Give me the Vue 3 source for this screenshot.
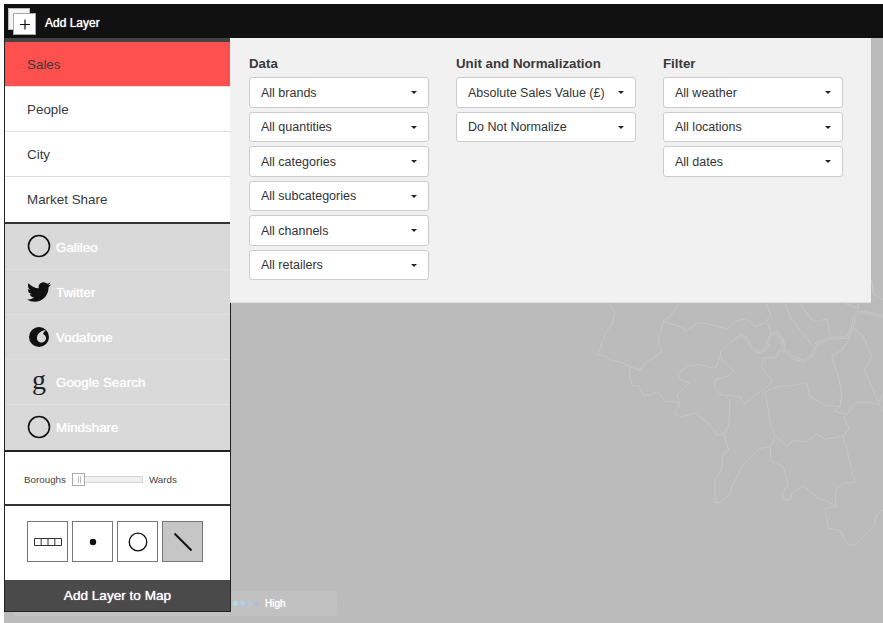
<template>
  <div class="page">
    <div class="topbar">
      <svg class="add-icon" width="32" height="32" viewBox="0 0 32 32">
        <rect x="4.5" y="4.5" width="21" height="21" fill="#f4f4f4" stroke="#bbb" />
        <rect x="9.5" y="9.5" width="22" height="21" fill="#fff" stroke="#aaa" />
        <path d="M21 15.5v10M16 20.5h10" stroke="#111" stroke-width="1.2" />
      </svg>
      <span class="add-label">Add Layer</span>
    </div>

    <div class="map">
      <svg class="boundaries" width="303" height="343" viewBox="0 0 909 1029">
        <path v-for="(d, i) in boundaries" :key="i" :d="d" />
      </svg>

      <div class="legend">
        <span v-for="c in legendDots" :key="c" class="dot" :style="{ background: c }"></span>
        <span class="legend-text">High</span>
      </div>

      <aside class="sidebar">
        <ul class="layers">
          <li v-for="(l, i) in layers" :key="l" :class="{ active: i === 0 }">{{ l }}</li>
        </ul>

        <ul class="sources">
          <li>
            <span class="src-icon"><svg width="24" height="24" viewBox="0 0 24 24"><circle cx="12" cy="12" r="10.5" fill="none" stroke="#111" stroke-width="1.6" /></svg></span>
            <span>Galileo</span>
          </li>
          <li>
            <span class="src-icon"><svg width="24" height="24" viewBox="0 0 24 24"><path fill="#111" d="M23.953 4.57a10 10 0 01-2.825.775 4.958 4.958 0 002.163-2.723c-.951.555-2.005.959-3.127 1.184a4.92 4.92 0 00-8.384 4.482C7.69 8.095 4.067 6.13 1.64 3.162a4.822 4.822 0 00-.666 2.475c0 1.71.87 3.213 2.188 4.096a4.904 4.904 0 01-2.228-.616v.06a4.923 4.923 0 003.946 4.827 4.996 4.996 0 01-2.212.085 4.936 4.936 0 004.604 3.417 9.867 9.867 0 01-6.102 2.105c-.39 0-.779-.023-1.17-.067a13.995 13.995 0 007.557 2.209c9.053 0 13.998-7.496 13.998-13.985 0-.21 0-.42-.015-.63A9.935 9.935 0 0024 4.59z" /></svg></span>
            <span>Twitter</span>
          </li>
          <li>
            <span class="src-icon"><svg width="24" height="24" viewBox="0 0 24 24"><circle cx="12" cy="12" r="10" fill="#111" /><path fill="#d9d9d9" d="M19 5C16 5.500 11 7 10 12 9.500 15 11.500 17.500 14.500 17.500 17.500 17.500 19.300 15 19 12.500 18.700 10.500 17 9.500 16 9 16.500 7 18 6 19 5z" /></svg></span>
            <span>Vodafone</span>
          </li>
          <li>
            <span class="src-icon google">g</span>
            <span>Google Search</span>
          </li>
          <li>
            <span class="src-icon"><svg width="24" height="24" viewBox="0 0 24 24"><circle cx="12" cy="12" r="10.5" fill="none" stroke="#111" stroke-width="1.6" /></svg></span>
            <span>Mindshare</span>
          </li>
        </ul>

        <div class="scale">
          <span>Boroughs</span>
          <div class="slider">
            <div class="handle"></div>
          </div>
          <span>Wards</span>
        </div>

        <div class="shapes">
          <button class="shape">
            <svg width="28" height="8" viewBox="0 0 28 8"><path d="M.5.5h27v7H.5zM7.2.5v7M14 .5v7M20.8.5v7" fill="none" stroke="#333" /></svg>
          </button>
          <button class="shape">
            <svg width="8" height="8" viewBox="0 0 8 8"><circle cx="4" cy="4" r="3.2" fill="#111" /></svg>
          </button>
          <button class="shape">
            <svg width="20" height="20" viewBox="0 0 20 20"><circle cx="10" cy="10" r="8.800" fill="none" stroke="#111" stroke-width="1.300" /></svg>
          </button>
          <button class="shape selected">
            <svg width="20" height="20" viewBox="0 0 20 20"><path d="M1.500 1.500l17 17" stroke="#111" stroke-width="1.900" /></svg>
          </button>
        </div>

        <div class="add-button">Add Layer to Map</div>
      </aside>

      <section class="panel">
        <div v-for="col in columns" :key="col.title" class="column">
          <h3>{{ col.title }}</h3>
          <div v-for="opt in col.options" :key="opt" class="dropdown">
            <span>{{ opt }}</span>
            <i class="caret"></i>
          </div>
        </div>
      </section>
    </div>
  </div>
</template>

<script setup>
const layers = ["Sales", "People", "City", "Market Share"]

const columns = [
  {
    title: "Data",
    options: ["All brands", "All quantities", "All categories", "All subcategories", "All channels", "All retailers"]
  },
  {
    title: "Unit and Normalization",
    options: ["Absolute Sales Value (£)", "Do Not Normalize"]
  },
  {
    title: "Filter",
    options: ["All weather", "All locations", "All dates"]
  }
]

const legendDots = ["#a9dcec", "#b4cfe6", "#b4c4e0", "#b4bbd0"]

// traced by hand from the map, coordinates are 3x
const boundaries = [
  "M88 70L105 100 95 135 75 160 62 200 52 224 75 228 100 243 120 245 150 260 180 270 195 250 245 215 235 180 250 125 300 140 320 152 355 127 400 135 440 148 465 125 500 115 525 140 555 128 572 105 560 70",
  "M250 125L280 100 295 70",
  "M150 260L147 282 157 318 175 315 190 345 210 345 232 335 258 365 285 365 298 370",
  "M298 370L292 345 330 307 300 300 292 283 320 258 360 253 385 262 408 260 420 232 458 270 450 285 405 300 403 320 415 342 435 345 450 365 445 440 432 460 412 465 385 430 345 398 305 412 287 402 298 370",
  "M420 232L422 215 460 180 480 162 500 170 520 205 545 215 560 195 570 160 590 155 610 175 615 205 640 230 670 240 695 225 705 190 750 172 800 170 815 140 820 105 835 92 909 105",
  "M465 178L482 168 498 176 518 212 545 221 564 199 574 166 590 161 604 178 609 208 636 236 670 246 700 229 710 195 752 178 804 175 821 142 826 108 838 98 909 111",
  "M560 128L572 155",
  "M435 345L480 350 492 373 520 350 555 325 578 303 545 263 550 235 590 232 597 210 615 215",
  "M555 335L572 430 585 470 570 500 540 505 490 555 455 620 452 640 420 668 405 668 405 600 425 570 430 520 447 510 432 465",
  "M555 335L600 318 630 318 680 307 690 350 735 375 780 380 785 340 775 290 755 230 790 205 810 170",
  "M780 380L765 395 800 402 830 367 870 367 895 375 909 340",
  "M800 402L792 415 808 445 790 468 735 478 710 462 680 485 640 480 622 500 590 470",
  "M790 468L825 607 790 610 770 625 765 660 768 680 735 660 715 655 670 618 635 640 630 660 615 660 605 640 625 615 610 560 572 542 572 500",
  "M735 685L745 745 780 752 805 795 825 795 865 755 885 730 890 705 909 690",
  "M735 685L768 680",
  "M815 140L850 170 875 230 853 270 880 330 895 370 909 395",
  "M615 70L630 110 695 195",
  "M660 70L700 125 740 118 750 165",
  "M795 70L835 85 835 70",
  "M875 0L880 40 909 60"
]
</script>

<style scoped>
.page {
  height: 623px;
  padding: 4px 0 0 4px;
  box-sizing: border-box;
  display: flex;
  flex-direction: column;
  overflow: hidden;
  font-family: "Liberation Sans", Arial, sans-serif;
  color: #333;
}

.topbar {
  height: 34px;
  flex: none;
  background: #111;
  display: flex;
  align-items: center;
  position: relative;
}

.add-icon {
  position: absolute;
  left: 0;
  top: 0;
}

.add-label {
  margin: 3px 0 0 41px;
  color: #fff;
  font-size: 12px;
  text-shadow: 0 0 1px #fff;
}

.map {
  flex: 1;
  position: relative;
  background: #bbb;
}

.boundaries {
  position: absolute;
  right: 0;
  bottom: 0;
  fill: none;
  stroke: #cbcbcb;
  stroke-width: 2.2;
  stroke-linejoin: round;
}

.legend {
  position: absolute;
  left: 9px;
  bottom: 7px;
  width: 324px;
  height: 25px;
  box-sizing: border-box;
  padding-left: 220px;
  display: flex;
  align-items: center;
  gap: 2px;
  background: #c1c1c1;
  border-radius: 3px;
}

.dot {
  width: 5px;
  height: 5px;
  border-radius: 2px;
}

.legend-text {
  margin-left: 4px;
  color: #fff;
  font-size: 10px;
  text-shadow: 0 0 1px #fff;
}

.sidebar {
  position: relative;
  width: 227px;
  box-sizing: border-box;
  border: 1px solid #222;
  border-top: 4px solid #444;
  background: #fff;
}

.layers,
.sources {
  list-style: none;
  margin: 0;
  padding: 0;
}

.layers li {
  height: 45px;
  box-sizing: border-box;
  padding-left: 22px;
  display: flex;
  align-items: center;
  font-size: 13.4px;
  color: #3a3a3a;
  border-bottom: 1px solid #ddd;
}

.layers li:last-child {
  height: 47px;
  border-bottom: 2px solid #333;
}

.layers li.active {
  background: #ff5050;
}

.sources {
  background: #d9d9d9;
  border-bottom: 2px solid #222;
}

.sources li {
  height: 45px;
  box-sizing: border-box;
  padding: 1px 0 0 22px;
  display: flex;
  align-items: center;
  color: #fff;
  font-size: 13.4px;
  text-shadow: 0 0 1px #fff;
  border-bottom: 1px solid #e0e0e0;
}

.sources li:first-child {
  height: 46px;
}

.sources li:last-child {
  padding-top: 0;
  border-bottom: none;
}

.src-icon {
  width: 24px;
  height: 24px;
  margin: -2px 5px 0 0;
  display: flex;
}

.src-icon.google {
  justify-content: center;
  color: #222;
  font-family: "Liberation Serif", serif;
  font-size: 28px;
  line-height: 19px;
  text-shadow: none;
}

.scale {
  height: 54px;
  box-sizing: border-box;
  padding: 3px 0 0 19px;
  display: flex;
  align-items: center;
  font-size: 9.8px;
  color: #444;
  border-bottom: 2px solid #333;
}

.slider {
  width: 71px;
  height: 7px;
  margin: 0 6px;
  background: #f0f0f0;
  border: 1px solid #d4d4d4;
  box-sizing: border-box;
  display: flex;
  align-items: center;
}

.handle {
  width: 13px;
  height: 13px;
  flex: none;
  margin-left: -1px;
  box-sizing: border-box;
  background: linear-gradient(to right, #fff 5px, #bbb 5px, #bbb 6px, #fff 6px, #fff 7px, #bbb 7px, #bbb 8px, #fff 8px);
  background-size: 100% 7px;
  background-position: center;
  background-repeat: no-repeat;
  background-color: #fff;
  border: 1px solid #aaa;
}

.shapes {
  height: 74px;
  box-sizing: border-box;
  padding: 15px 0 0 22px;
  display: flex;
  gap: 4px;
}

.shape {
  width: 41px;
  height: 41px;
  padding: 0;
  background: #fff;
  border: 1px solid #777;
  display: flex;
  align-items: center;
  justify-content: center;
}

.shape.selected {
  background: #c6c6c6;
}

.add-button {
  height: 31px;
  background: #4a4a4a;
  color: #fff;
  font-size: 13.6px;
  text-shadow: 0 0 1px #fff;
  display: flex;
  align-items: center;
  justify-content: center;
}

.panel {
  position: absolute;
  left: 226px;
  top: 0;
  width: 641px;
  height: 265px;
  box-sizing: border-box;
  padding: 17px 0 0 19px;
  display: flex;
  gap: 27px;
  background: #f1f1f1;
  border-bottom: 1px solid #ddd;
}

.column {
  width: 180px;
}

.column h3 {
  margin: 1px 0 5px;
  font-size: 13.3px;
  line-height: 16px;
  color: #3a3a3a;
}

.dropdown {
  height: 30.5px;
  margin-bottom: 4px;
  box-sizing: border-box;
  padding: 1px 11px 0;
  display: flex;
  align-items: center;
  justify-content: space-between;
  background: #fff;
  border: 1px solid #ccc;
  border-radius: 3px;
  font-size: 12.5px;
  color: #333;
}

.caret {
  width: 0;
  height: 0;
  border-left: 3.5px solid transparent;
  border-right: 3.5px solid transparent;
  border-top: 3.5px solid #222;
}
</style>
